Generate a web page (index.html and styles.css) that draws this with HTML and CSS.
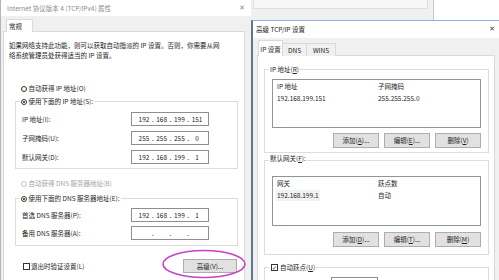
FILE: index.html
```html
<!doctype html>
<html>
	<head>
		<meta charset="utf-8">
		<link rel="stylesheet" href="styles.css">
	</head>
	<body>
		<div class="desk">
			<!-- window behind -->
			<div class="win-back"><div class="back-panel"></div></div>

			<!-- IPv4 properties -->
			<div class="win win-left">
				<div class="titlebar">
					<span>Internet 协议版本 4 (TCP/IPv4) 属性</span>
					<span class="close">✕</span>
				</div>
				<div class="winbody">
					<div class="tabs"><div class="tab on">常规</div></div>
					<div class="panel">
						<p class="desc">如果网络支持此功能，则可以获取自动指派的 IP 设置。否则，你需要从网<br>络系统管理员处获得适当的 IP 设置。</p>

						<div class="opt opt-auto"><span class="radio"></span>自动获得 IP 地址(O)</div>
						<fieldset class="grp grp-ip">
							<legend class="opt"><span class="radio on"></span>使用下面的 IP 地址(S):</legend>
							<div class="field"><span>IP 地址(I):</span><div class="ipbox"><span>192</span><i>.</i><span>168</span><i>.</i><span>199</span><i>.</i><span>151</span></div></div>
							<div class="field"><span>子网掩码(U):</span><div class="ipbox"><span>255</span><i>.</i><span>255</span><i>.</i><span>255</span><i>.</i><span>0</span></div></div>
							<div class="field"><span>默认网关(D):</span><div class="ipbox"><span>192</span><i>.</i><span>168</span><i>.</i><span>199</span><i>.</i><span>1</span></div></div>
						</fieldset>

						<div class="opt opt-dns off"><span class="radio"></span>自动获得 DNS 服务器地址(B)</div>
						<fieldset class="grp grp-dns">
							<legend class="opt"><span class="radio on"></span>使用下面的 DNS 服务器地址(E):</legend>
							<div class="field"><span>首选 DNS 服务器(P):</span><div class="ipbox"><span>192</span><i>.</i><span>168</span><i>.</i><span>199</span><i>.</i><span>1</span></div></div>
							<div class="field"><span>备用 DNS 服务器(A):</span><div class="ipbox"><span></span><i>.</i><span></span><i>.</i><span></span><i>.</i><span></span></div></div>
						</fieldset>

						<div class="footrow">
							<div class="chk"><span class="box"></span>退出时验证设置(L)</div>
							<button class="btn btn-adv">高级(V)...</button>
						</div>
					</div>
				</div>
			</div>

			<!-- advanced TCP/IP -->
			<div class="win win-right">
				<div class="titlebar">
					<span>高级 TCP/IP 设置</span>
					<span class="close">✕</span>
				</div>
				<div class="winbody">
					<div class="tabs">
						<div class="tab on">IP 设置</div>
						<div class="tab t-dns">DNS</div>
						<div class="tab t-wins">WINS</div>
					</div>
					<div class="panel">
						<div class="rgrp rgrp-ip">
							<div class="cap">IP 地址(<u>R</u>)</div>
							<div class="list">
								<div class="lrow head"><span>IP 地址</span><span>子网掩码</span></div>
								<div class="lrow"><span>192.168.199.151</span><span>255.255.255.0</span></div>
							</div>
							<div class="btns">
								<button class="btn">添加(<u>A</u>)...</button>
								<button class="btn">编辑(<u>E</u>)...</button>
								<button class="btn">删除(<u>V</u>)</button>
							</div>
						</div>

						<div class="rgrp rgrp-gw">
							<div class="cap">默认网关(<u>F</u>):</div>
							<div class="list list-gw">
								<div class="lrow head"><span>网关</span><span>跃点数</span></div>
								<div class="lrow"><span class="sel">192.168.199.1</span><span>自动</span></div>
							</div>
							<div class="btns">
								<button class="btn">添加(<u>D</u>)...</button>
								<button class="btn">编辑(<u>T</u>)...</button>
								<button class="btn">删除(<u>M</u>)</button>
							</div>
						</div>

						<div class="rgrp rgrp-metric">
							<div class="cap chk"><span class="box">✓</span>自动跃点(<u>U</u>)</div>
							<div class="metric"><div class="edit"></div></div>
						</div>
					</div>
				</div>
			</div>

			<!-- annotation ring -->
			<svg class="ring" width="86" height="31" viewBox="0 0 86 31">
				<ellipse cx="43" cy="15" rx="41" ry="13.5" fill="none" stroke="#c93fc9" stroke-width="1.6"/>
			</svg>
		</div>
	</body>
</html>
```

FILE: styles.css
```css
* {
	margin: 0;
	padding: 0;
	box-sizing: border-box;
}
html, body {
	width: 499px;
	height: 280px;
	overflow: hidden;
}
body {
	background: #fff;
	font-family: "Noto Sans CJK SC", "Noto Sans", sans-serif;
	font-size: 6.5px;
	line-height: 11px;
	color: #1e1e1e;
}
u {
	text-decoration: underline;
}
.desk {
	position: relative;
	width: 499px;
	height: 280px;
	overflow: hidden;
}

/* windows */
.win-back {
	position: absolute;
	left: 250px;
	top: 0;
	width: 184px;
	height: 22px;
	background: #f0f0f0;
	border-right: 1px solid #c9c9c9;
}
.back-panel {
	height: 9px;
	margin: 0 5px 0 3px;
	background: #f7f7f7;
	border: 1px solid #dedede;
	border-top: none;
}
.win {
	position: absolute;
	background: #f0f0f0;
	overflow: hidden;
}
.win-left {
	left: 0;
	top: 0;
	width: 251px;
	height: 280px;
	border-left: 1px solid #b4b4b4;
}
.win-right {
	left: 251px;
	top: 20px;
	width: 252px;
	height: 260px;
	border-top: 1px solid #8ab3df;
	border-left: 2px solid #5c7794;
}
.titlebar {
	height: 16px;
	background: #fff;
	display: flex;
	align-items: center;
	justify-content: space-between;
	padding: 0 6px 0 6px;
	color: #8c8c8c;
	white-space: nowrap;
}
.win-right .titlebar {
	height: 17px;
	padding: 0 8px 0 3px;
	color: #1a1a1a;
}
.close {
	font-family: "DejaVu Sans", sans-serif;
	font-size: 7px;
	color: #8a8a8a;
}
.win-right .close {
	color: #444;
}
.winbody {
	padding: 3px 6px 0 2px;
}
.win-right .winbody {
	padding: 2px 8px 0 4px;
}

/* tabs */
.tabs {
	display: flex;
	align-items: flex-end;
	padding-left: 3px;
}
.win-right .tabs {
	padding-left: 1px;
}
.tab {
	height: 13px;
	line-height: 12px;
	padding: 0 3px;
	border: 1px solid #d9d9d9;
	border-bottom: none;
	background: #f0f0f0;
	margin-bottom: -1px;
	position: relative;
	white-space: nowrap;
}
.tab.on {
	background: #fff;
	z-index: 1;
}
.win-left .tab.on {
	width: 27px;
	padding-left: 2px;
}
.win-right .tab.on {
	height: 16px;
	line-height: 16px;
	min-width: 25px;
	padding: 0 1px;
}
.win-right .tab {
	text-align: center;
}
.t-dns {
	width: 24px;
	border-left: none;
}
.t-wins {
	width: 29px;
	border-left: none;
}
.panel {
	background: #fff;
	border: 1px solid #d9d9d9;
	height: 300px;
	padding-left: 5px;
}
.win-right .panel {
	padding: 0 5px 0 6px;
}

/* left dialog content */
.desc {
	margin-top: 8px;
	line-height: 10px;
	white-space: nowrap;
}
.opt {
	display: flex;
	align-items: center;
	height: 11px;
	margin-left: 12px;
	white-space: nowrap;
}
.opt-auto {
	margin-top: 23px;
}
.opt-dns {
	margin-top: 9px;
}
.off {
	color: #a3a3a3;
}
.radio {
	width: 6px;
	height: 6px;
	border: 1px solid #333;
	border-radius: 50%;
	margin-right: 1.5px;
	background: #fff;
	flex: none;
	display: flex;
	align-items: center;
	justify-content: center;
}
.radio.on::after {
	content: "";
	width: 2px;
	height: 2px;
	border-radius: 50%;
	background: #222;
}
.off .radio {
	border-color: #c4c4c4;
}
.grp {
	width: 223px;
	margin-left: 6px;
	border: 1px solid #dcdcdc;
	padding: 0 4px;
	display: flex;
	flex-direction: column;
	gap: 5px;
}
.grp legend {
	margin-left: 0;
	padding: 0 1px;
}
.grp-ip {
	margin-top: 2px;
	padding-top: 5px;
	padding-bottom: 4px;
}
.grp-dns {
	margin-top: 4px;
	padding-top: 4px;
	padding-bottom: 5px;
	gap: 4px;
}
.field {
	display: grid;
	grid-template-columns: 109px 78px;
	align-items: center;
	height: 14px;
	margin-left: 2px;
	white-space: nowrap;
}
.ipbox {
	height: 14px;
	border: 1px solid #8e8e8e;
	display: flex;
	align-items: center;
	padding: 0 3px 0 4px;
}
.ipbox span {
	flex: 1;
	text-align: center;
}
.ipbox i {
	font-style: normal;
}
.footrow {
	display: flex;
	justify-content: space-between;
	align-items: center;
	margin: 13px 7px 0 14px;
}
.chk {
	display: flex;
	align-items: center;
	white-space: nowrap;
}
.box {
	width: 7px;
	height: 7px;
	border: 1px solid #333;
	background: #fff;
	margin-right: 1px;
	display: inline-flex;
	align-items: center;
	justify-content: center;
	font-family: "DejaVu Sans", sans-serif;
	font-size: 6px;
	line-height: 6px;
	flex: none;
}
.btn {
	font: inherit;
	color: inherit;
	height: 15px;
	width: 46px;
	background: #e1e1e1;
	border: 1px solid #adadad;
	text-align: center;
	white-space: nowrap;
}
.btn-adv {
	width: 54px;
	height: 14px;
}
.ring {
	position: absolute;
	left: 161px;
	top: 249px;
}

/* right dialog content */
.rgrp {
	border: 1px solid #dcdcdc;
	padding: 0 7px 0 2px;
}
.cap {
	width: max-content;
	height: 11px;
	line-height: 11px;
	margin-top: -6px;
	margin-left: 2px;
	padding: 0 1px;
	background: #fff;
	white-space: nowrap;
}
.rgrp-ip {
	margin-top: 13px;
	padding-bottom: 4px;
}
.rgrp-gw {
	margin-top: 7px;
	padding-bottom: 7px;
}
.rgrp-gw .cap {
	margin-top: -8px;
}
.rgrp-metric {
	margin-top: 12px;
}
.rgrp-metric .box {
	margin-left: 1px;
	margin-right: 2px;
}
.list {
	margin: 4px 0 0 5px;
	height: 49px;
	border: 1px solid #8f959c;
	background: #fff;
	padding-left: 4px;
}
.list-gw {
	margin-top: 12px;
	height: 50px;
}
.lrow {
	display: grid;
	grid-template-columns: 101px 1fr;
	height: 11px;
	line-height: 11px;
	white-space: nowrap;
}
.lrow.head {
	height: 13px;
	line-height: 13px;
}
.sel {
	justify-self: start;
	background: #f2f2f2;
	padding: 0 1px;
	margin-left: -1px;
}
.btns {
	display: flex;
	justify-content: flex-end;
	gap: 5px;
	margin-top: 5px;
}
.rgrp-gw .btns {
	margin-top: 6px;
}
.metric {
	height: 20px;
	padding: 4px 0 0 64px;
}
.edit {
	width: 47px;
	height: 14px;
	border: 1px solid #8e8e8e;
	background: #fff;
}
```
